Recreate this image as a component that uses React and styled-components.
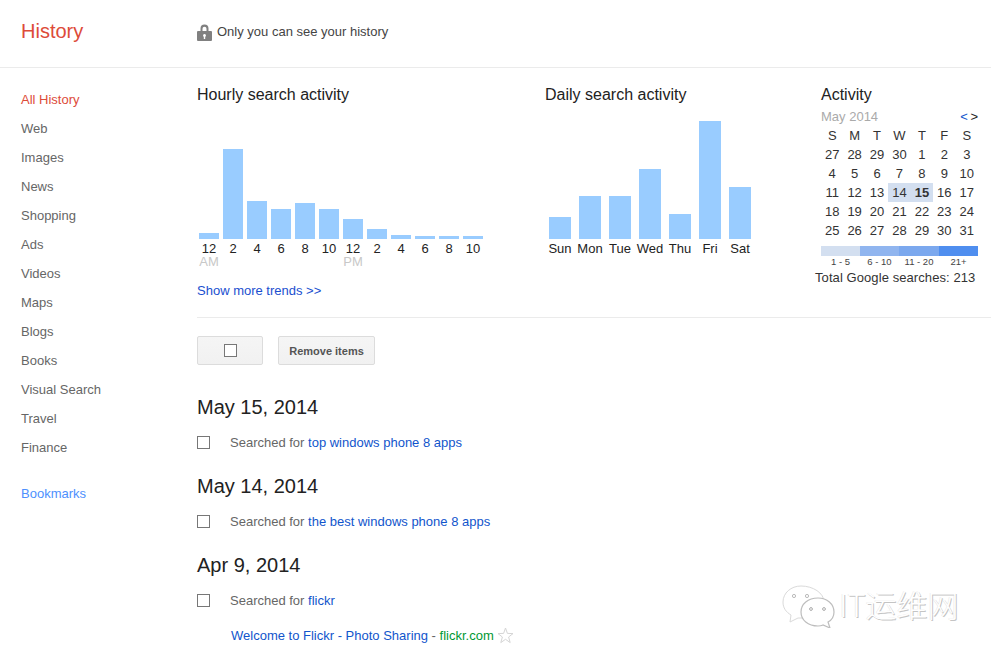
import React from "react";
import styled, { createGlobalStyle } from "styled-components";

const Global = createGlobalStyle`
  html, body { margin: 0; padding: 0; background: #fff; }
  body { font-family: "Liberation Sans", Arial, sans-serif; color: #222; overflow: hidden; }
  #root { height: 656px; overflow: hidden; }
`;

const Page = styled.div`display: flex; flex-direction: column; width: 991px; height: 656px; overflow: hidden; position: relative;`;
const Header = styled.header`display: flex; align-items: center; height: 67px; border-bottom: 1px solid #ebebeb; flex: none;`;
const Brand = styled.h1`width: 176px; margin: 0 0 5px 21px; font-size: 20px; font-weight: 400; line-height: 24px; color: #dd4b39;`;
const Privacy = styled.div`display: flex; align-items: center; gap: 5px; font-size: 13px; line-height: 16px; color: #444; margin-bottom: 3px;`;
const Body = styled.div`display: flex; flex: 1; min-height: 0;`;
const Sidebar = styled.nav`width: 176px; flex: none; padding: 17px 0 0 21px; display: flex; flex-direction: column;`;
const NavItem = styled.a`height: 29px; line-height: 29px; font-size: 13px; color: ${p => p.$active ? "#dd4b39" : p.$accent ? "#4d90fe" : "#666"}; margin-top: ${p => p.$accent ? "17px" : "0"};`;
const Main = styled.main`flex: 1; min-width: 0;`;
const Trends = styled.section`display: flex; height: 232px; padding-top: 17px; border-bottom: 1px solid #ebebeb; box-sizing: content-box;`;
const Title = styled.h2`margin: 0; font-size: 16px; font-weight: 400; line-height: 20px; color: #222;`;
const HourlyPanel = styled.div`width: 348px; flex: none;`;
const DailyPanel = styled.div`width: 276px; flex: none;`;
const ActivityPanel = styled.div`width: 157px; flex: none;`;
const Bars = styled.div`display: flex; height: 134px; align-items: flex-end; gap: ${p => p.$gap}px; padding-left: ${p => p.$inset}px;`;
const Bar = styled.div`width: ${p => p.$w}px; height: ${p => p.$h}px; background: #99ccff; flex: none;`;
const Labels = styled.div`display: flex; gap: ${p => p.$gap}px; padding-left: ${p => p.$inset}px;`;
const Label = styled.div`width: ${p => p.$w}px; flex: none; display: flex; flex-direction: column; align-items: center; padding-top: 1px; font-size: 13px; line-height: 18px; color: #222; white-space: nowrap;`;
const Meridiem = styled.span`font-size: 13px; line-height: 12px; margin-top: -2px; color: #c8c8c8;`;
const EmptyMeridiem = styled.span`height: 10px;`;
const MoreLink = styled.a`display: block; margin-top: 15px; font-size: 13px; line-height: 16px; color: #1a4fcf;`;
const MonthRow = styled.div`display: flex; justify-content: space-between; align-items: center; height: 19px; margin-top: 2px; font-size: 13px;`;
const Month = styled.span`color: #aaa;`;
const Pager = styled.span`color: #222; word-spacing: -1px;`;
const PagerLink = styled.span`color: #1155cc;`;
const Calendar = styled.div`display: grid; grid-template-columns: repeat(7, 22.43px); grid-auto-rows: 19px; font-size: 13px; line-height: 19px; text-align: center; color: #333;`;
const Day = styled.div`background: ${p => p.$hit ? "#d3dff0" : "transparent"}; font-weight: ${p => p.$today ? 700 : 400};`;
const Legend = styled.div`display: grid; grid-template-columns: 39px 39px 40px 39px; margin-top: 6px;`;
const Swatch = styled.div`height: 10px; background: ${p => p.$c};`;
const LegendText = styled.div`font-size: 9.5px; line-height: 12px; text-align: center; color: #444;`;
const Total = styled.div`margin: 2px 0 0 -6px; font-size: 13px; letter-spacing: 0.08px; line-height: 16px; color: #333; white-space: nowrap;`;
const Actions = styled.div`display: flex; gap: 15px; margin-top: 18px; height: 29px;`;
const ActionButton = styled.div`
  box-sizing: border-box; height: 29px; width: ${p => p.$w}px; display: flex; align-items: center; justify-content: center;
  background: linear-gradient(#f5f5f5, #f1f1f1); border: 1px solid #dcdcdc; border-radius: 2px;
  font-size: 11px; font-weight: 700; color: #555;
`;
const Box = styled.span`display: block; box-sizing: border-box; width: 13px; height: 13px; border: 1px solid #777; flex: none; background: #fff;`;
const History = styled.section`margin-top: 30px;`;
const DateHead = styled.h3`margin: ${p => p.$first ? "0" : "22px"} 0 0; font-size: 20px; font-weight: 400; line-height: 24px; color: #222;`;
const Entry = styled.div`display: flex; align-items: center; height: 20px; margin-top: 13px; font-size: 13px; color: #666;`;
const EntryText = styled.span`margin-left: 20px;`;
const Query = styled.a`color: #1155cc;`;
const Result = styled.div`display: flex; align-items: center; height: 20px; margin: 15px 0 0 34px; font-size: 13px; color: #666; white-space: pre;`;
const Site = styled.span`color: #009933;`;
const Star = styled.svg`margin-left: 3px; flex: none;`;
const Watermark = styled.div`position: absolute; left: 781px; top: 584px; display: flex; align-items: center; gap: 2px; pointer-events: none;`;
const MarkText = styled.span`
  font-family: "Noto Sans CJK SC", sans-serif; font-size: 31px; font-weight: 300; line-height: 44px; color: #fff; margin-top: -4px;
  text-shadow: 1px 1px 0 #c4c4c4, -0.5px 0 0 #e6e6e6;
`;

const navItems = ["Web","Images","News","Shopping","Ads","Videos","Maps","Blogs","Books","Visual Search","Travel","Finance"];
const hourly = [[6,"12","AM"],[90,"2"],[38,"4"],[30,"6"],[36,"8"],[30,"10"],[20,"12","PM"],[10,"2"],[4,"4"],[3,"6"],[3,"8"],[3,"10"]];
const daily = [[22,"Sun"],[43,"Mon"],[43,"Tue"],[70,"Wed"],[25,"Thu"],[118,"Fri"],[52,"Sat"]];
const days = [27,28,29,30,1,2,3,4,5,6,7,8,9,10,11,12,13,14,15,16,17,18,19,20,21,22,23,24,25,26,27,28,29,30,31];
const legend = [["#d3dff0","1 - 5"],["#90b5ef","6 - 10"],["#7ba8ee","11 - 20"],["#4f8eef","21+"]];

export default function App() {
  return (
    <Page>
      <Global />
      <Header>
        <Brand>History</Brand>
        <Privacy>
          <svg width="15" height="17" viewBox="0 0 15 17">
            <path d="M3.5 7V4.5a4 4 0 0 1 8 0V7h-2V4.7a2 2 0 0 0-4 0V7z" fill="#808080" />
            <path fillRule="evenodd" d="M1 7h13a1 1 0 0 1 1 1v8a1 1 0 0 1-1 1H1a1 1 0 0 1-1-1V8a1 1 0 0 1 1-1zm6.5 3a1.5 1.5 0 0 0-.7 2.8V15h1.4v-2.2a1.5 1.5 0 0 0-.7-2.8z" fill="#808080" />
          </svg>
          Only you can see your history
        </Privacy>
      </Header>
      <Body>
        <Sidebar>
          <NavItem $active>All History</NavItem>
          {navItems.map(n => <NavItem key={n}>{n}</NavItem>)}
          <NavItem $accent>Bookmarks</NavItem>
        </Sidebar>
        <Main>
          <Trends>
            <HourlyPanel>
              <Title>Hourly search activity</Title>
              <Bars $gap={4} $inset={2}>
                {hourly.map(([h], i) => <Bar key={i} $w={20} $h={h} />)}
              </Bars>
              <Labels $gap={4} $inset={2}>
                {hourly.map(([, t, m], i) => (
                  <Label key={i} $w={20}>{t}{m ? <Meridiem>{m}</Meridiem> : <EmptyMeridiem />}</Label>
                ))}
              </Labels>
              <MoreLink>Show more trends &gt;&gt;</MoreLink>
            </HourlyPanel>
            <DailyPanel>
              <Title>Daily search activity</Title>
              <Bars $gap={8} $inset={4}>
                {daily.map(([h, t]) => <Bar key={t} $w={22} $h={h} />)}
              </Bars>
              <Labels $gap={8} $inset={4}>
                {daily.map(([, t]) => <Label key={t} $w={22}>{t}</Label>)}
              </Labels>
            </DailyPanel>
            <ActivityPanel>
              <Title>Activity</Title>
              <MonthRow>
                <Month>May 2014</Month>
                <Pager><PagerLink>&lt;</PagerLink> &gt;</Pager>
              </MonthRow>
              <Calendar>
                {["S","M","T","W","T","F","S"].map((d, i) => <Day key={i}>{d}</Day>)}
                {days.map((d, i) => <Day key={i} $hit={i === 17 || i === 18} $today={i === 18}>{d}</Day>)}
              </Calendar>
              <Legend>
                {legend.map(([c]) => <Swatch key={c} $c={c} />)}
                {legend.map(([c, t]) => <LegendText key={t}>{t}</LegendText>)}
              </Legend>
              <Total>Total Google searches: 213</Total>
            </ActivityPanel>
          </Trends>
          <Actions>
            <ActionButton $w={66}><Box /></ActionButton>
            <ActionButton $w={97}>Remove items</ActionButton>
          </Actions>
          <History>
            <DateHead $first>May 15, 2014</DateHead>
            <Entry><Box /><EntryText>Searched for <Query>top windows phone 8 apps</Query></EntryText></Entry>
            <DateHead>May 14, 2014</DateHead>
            <Entry><Box /><EntryText>Searched for <Query>the best windows phone 8 apps</Query></EntryText></Entry>
            <DateHead>Apr 9, 2014</DateHead>
            <Entry><Box /><EntryText>Searched for <Query>flickr</Query></EntryText></Entry>
            <Result>
              <Query>Welcome to Flickr - Photo Sharing</Query> - <Site>flickr.com</Site>
              <Star width="17" height="17" viewBox="0 0 17 17">
                <polygon points="8.5,1 10.4,6.4 16,6.6 11.6,10 13.2,15.6 8.5,12.3 3.8,15.6 5.4,10 1,6.6 6.6,6.4" fill="#fff" stroke="#d5d5d5" strokeWidth="1" />
              </Star>
            </Result>
          </History>
        </Main>
      </Body>
      <Watermark>
        <svg width="56" height="44" viewBox="0 0 56 44">
          <path d="M20 2C10 2 2 9 2 18c0 6 3 10 8 13l-1 7 8-4c1 0 2 0 3 0h9c8-2 14-9 14-16C43 9 32 2 20 2z" fill="#fff" stroke="#dadada" strokeWidth="1" />
          <path d="M37 14c-10 0-17 6-17 14s7 14 17 14c2 0 3 0 5-1l7 3-2-6c4-2 6-6 6-10 0-8-7-14-16-14z" fill="#fff" stroke="#bdbdbd" strokeWidth="1.2" />
          <circle cx="13" cy="12" r="1.6" fill="none" stroke="#bbb" />
          <circle cx="26" cy="12" r="1.6" fill="none" stroke="#bbb" />
          <circle cx="30" cy="25" r="1.4" fill="none" stroke="#aaa" />
          <circle cx="43" cy="25" r="1.4" fill="none" stroke="#aaa" />
        </svg>
        <MarkText>IT运维网</MarkText>
      </Watermark>
    </Page>
  );
}
